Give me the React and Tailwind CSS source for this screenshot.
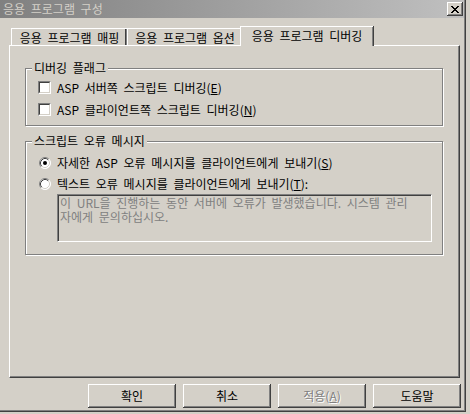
import React from "react";

const raised =
  "shadow-[inset_-1px_-1px_0_#404040,inset_1px_1px_0_#ffffff,inset_-2px_-2px_0_#808080]";

function CloseButton() {
  return (
    <div className={`w-[16px] h-[14px] bg-[#d4d0c8] flex items-center justify-center ${raised}`}>
      <svg width="8" height="7" viewBox="0 0 8 7" shapeRendering="crispEdges">
        <path
          d="M0 0h2v1h1v1h2v-1h1v-1h2v1h-1v1h-1v1h-1v1h1v1h1v1h1v1h-2v-1h-1v-1h-2v1h-1v1h-2v-1h1v-1h1v-1h1v-1h-1v-1h-1v-1h-1z"
          fill="#000"
        />
      </svg>
    </div>
  );
}

function Tab({ label, width, selected }) {
  if (selected) {
    return (
      <div
        className="relative z-10 -ml-[2px] -mb-[1px] h-[20px] bg-[#d4d0c8] border-t border-l border-white shadow-[inset_-1px_0_0_#808080,1px_0_0_#404040] flex justify-center pt-[2px] leading-[13px]"
        style={{ width }}
      >
        {label}
      </div>
    );
  }
  return (
    <div
      className="h-[17px] bg-[#d4d0c8] border-t border-l border-white shadow-[inset_-1px_0_0_#808080,inset_-2px_0_0_#404040] flex justify-center pt-[2px] leading-[13px]"
      style={{ width }}
    >
      {label}
    </div>
  );
}

function GroupBox({ title, className, children }) {
  return (
    <div
      className={`relative border border-[#808080] shadow-[inset_1px_1px_0_#ffffff,1px_1px_0_#ffffff] ${className}`}
    >
      <span className="absolute left-[6px] -top-[8px] px-[2px] bg-[#d4d0c8] leading-[13px]">
        {title}
      </span>
      {children}
    </div>
  );
}

function CheckBox() {
  return (
    <div className="w-[13px] h-[13px] border border-t-[#808080] border-l-[#808080] border-b-white border-r-white shrink-0">
      <div className="w-full h-full bg-white border border-t-[#404040] border-l-[#404040] border-b-[#d4d0c8] border-r-[#d4d0c8]" />
    </div>
  );
}

function Radio({ checked }) {
  return (
    <svg width="12" height="12" viewBox="0 0 12 12" className="shrink-0">
      <circle cx="6" cy="6" r="5.5" fill="#ffffff" />
      <path d="M2.11 9.89A5.5 5.5 0 0 1 9.89 2.11" fill="none" stroke="#808080" />
      <path d="M9.89 2.11A5.5 5.5 0 0 1 2.11 9.89" fill="none" stroke="#ffffff" />
      <path d="M2.82 9.18A4.5 4.5 0 0 1 9.18 2.82" fill="none" stroke="#404040" />
      <path d="M9.18 2.82A4.5 4.5 0 0 1 2.82 9.18" fill="none" stroke="#d4d0c8" />
      {checked && <circle cx="6" cy="6" r="2" fill="#000" />}
    </svg>
  );
}

function Mn({ c }) {
  return <span className="underline underline-offset-1">{c}</span>;
}

function Button({ children, disabled }) {
  return (
    <div
      className={`w-[88px] h-[24px] bg-[#d4d0c8] flex items-center justify-center pb-[1px] ${raised} ${
        disabled ? "text-[#808080] [text-shadow:1px_1px_0_#ffffff]" : ""
      }`}
    >
      {children}
    </div>
  );
}

export default function App() {
  return (
    <div
      className="w-[470px] h-[414px] bg-[#d4d0c8] text-[12px] text-black overflow-hidden [word-spacing:3px]"
      style={{ fontFamily: '"Noto Sans CJK KR", "Liberation Sans", sans-serif' }}
    >
      <div className="w-[466px] h-[412px] flex flex-col shadow-[inset_-1px_-1px_0_#404040,inset_-2px_-2px_0_#808080]">
        {/* 제목 표시줄 */}
        <div className="w-[464px] h-[18px] flex items-center justify-between pl-[3px] pr-[1px] bg-gradient-to-r from-[#808080] to-[#c0c0c0] text-[#d4d0c8]">
          <span className="leading-[14px]">응용 프로그램 구성</span>
          <CloseButton />
        </div>

        {/* 탭 */}
        <div className="ml-[9px] mt-[8px] flex flex-col">
          <div className="h-[19px] flex items-end pl-[2px]">
            <Tab label="응용 프로그램 매핑" width={116} />
            <Tab label="응용 프로그램 옵션" width={115} />
            <Tab label="응용 프로그램 디버깅" width={133} selected />
          </div>
          <div className="w-[451px] h-[333px] border border-t-white border-l-white border-r-[#404040] border-b-[#404040] shadow-[inset_-1px_-1px_0_#808080] pl-[15px] pt-[22px] flex flex-col">
            <GroupBox title="디버깅 플래그" className="w-[418px] h-[58px] pt-[12px] pl-[12px] flex flex-col gap-[9px]">
              <div className="flex items-center gap-[6px] h-[13px]">
                <CheckBox />
                <span>
                  ASP 서버쪽 스크립트 디버깅(<Mn c="E" />)
                </span>
              </div>
              <div className="flex items-center gap-[6px] h-[13px]">
                <CheckBox />
                <span>
                  ASP 클라이언트쪽 스크립트 디버깅(<Mn c="N" />)
                </span>
              </div>
            </GroupBox>

            <GroupBox title="스크립트 오류 메시지" className="mt-[15px] w-[418px] h-[114px] pt-[15px] pl-[13px] flex flex-col">
              <div className="flex items-center gap-[6px] h-[12px]">
                <Radio checked />
                <span>
                  자세한 ASP 오류 메시지를 클라이언트에게 보내기(<Mn c="S" />)
                </span>
              </div>
              <div className="flex items-center gap-[6px] h-[12px] mt-[9px]">
                <Radio />
                <span>
                  텍스트 오류 메시지를 클라이언트에게 보내기(<Mn c="T" />):
                </span>
              </div>
              <div className="ml-[18px] mt-[4px] w-[375px] h-[48px] border border-t-[#808080] border-l-[#808080] border-b-white border-r-white shadow-[inset_1px_1px_0_#404040] pl-[2px] pt-[1px] text-[#808080] leading-[14px] whitespace-nowrap overflow-hidden">
                <div>이 URL을 진행하는 동안 서버에 오류가 발생했습니다. 시스템 관리</div>
                <div>자에게 문의하십시오.</div>
              </div>
            </GroupBox>
          </div>
        </div>

        {/* 버튼 */}
        <div className="mt-[6px] ml-[88px] flex gap-[7px]">
          <Button>확인</Button>
          <Button>취소</Button>
          <Button disabled>
            적용(<Mn c="A" />)
          </Button>
          <Button>도움말</Button>
        </div>
      </div>
    </div>
  );
}
